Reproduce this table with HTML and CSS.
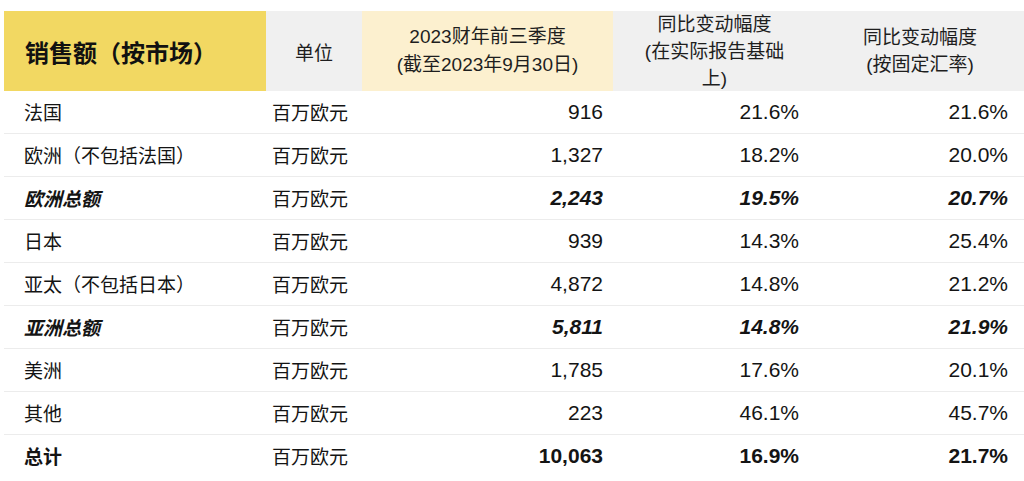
FILE: index.html
```html
<!DOCTYPE html>
<html lang="zh-CN">
<head>
<meta charset="utf-8">
<title>销售额（按市场）</title>
<link rel="stylesheet" href="styles.css">
</head>
<body>
<div class="sales-table">
  <div class="hcell h-title">销售额（按市场）</div>
  <div class="hcell h-unit">单位</div>
  <div class="hcell h-period">2023财年前三季度<br>(截至2023年9月30日)</div>
  <div class="hcell h-grey">同比变动幅度<br>(在实际报告基础<br>上)</div>
  <div class="hcell h-grey">同比变动幅度<br>(按固定汇率)</div>

  <div class="row"><div class="c name">法国</div><div class="c unit">百万欧元</div><div class="c num">916</div><div class="c pct">21.6%</div><div class="c pct2">21.6%</div></div>
  <div class="row"><div class="c name">欧洲（不包括法国）</div><div class="c unit">百万欧元</div><div class="c num">1,327</div><div class="c pct">18.2%</div><div class="c pct2">20.0%</div></div>
  <div class="row sub"><div class="c name">欧洲总额</div><div class="c unit">百万欧元</div><div class="c num">2,243</div><div class="c pct">19.5%</div><div class="c pct2">20.7%</div></div>
  <div class="row"><div class="c name">日本</div><div class="c unit">百万欧元</div><div class="c num">939</div><div class="c pct">14.3%</div><div class="c pct2">25.4%</div></div>
  <div class="row"><div class="c name">亚太（不包括日本）</div><div class="c unit">百万欧元</div><div class="c num">4,872</div><div class="c pct">14.8%</div><div class="c pct2">21.2%</div></div>
  <div class="row sub"><div class="c name">亚洲总额</div><div class="c unit">百万欧元</div><div class="c num">5,811</div><div class="c pct">14.8%</div><div class="c pct2">21.9%</div></div>
  <div class="row"><div class="c name">美洲</div><div class="c unit">百万欧元</div><div class="c num">1,785</div><div class="c pct">17.6%</div><div class="c pct2">20.1%</div></div>
  <div class="row"><div class="c name">其他</div><div class="c unit">百万欧元</div><div class="c num">223</div><div class="c pct">46.1%</div><div class="c pct2">45.7%</div></div>
  <div class="row total last"><div class="c name">总计</div><div class="c unit">百万欧元</div><div class="c num">10,063</div><div class="c pct">16.9%</div><div class="c pct2">21.7%</div></div>
</div>
</body>
</html>
```

FILE: styles.css
```css
html, body {
  margin: 0;
  padding: 0;
  background: #ffffff;
}
body {
  padding: 11px 0 0 4px;
  font-family: "Liberation Sans", "Noto Sans CJK SC", sans-serif;
  color: #141414;
}
.sales-table {
  display: grid;
  grid-template-columns: 262px 96px 251px 203px 1fr;
}
.hcell {
  box-sizing: border-box;
  height: 80px;
  overflow: hidden;
  display: flex;
  align-items: center;
  justify-content: center;
  text-align: center;
  font-size: 19px;
  line-height: 27px;
  font-family: "Liberation Sans", "Noto Sans CJK SC", sans-serif;
  color: #1e1e1e;
}
.h-title {
  background: #f2d862;
  justify-content: flex-start;
  padding-left: 21px;
  font-size: 24px;
  font-weight: bold;
  font-family: "Noto Sans CJK SC", sans-serif;
  color: #111;
}
.h-unit { background: #f0f0f0; font-family: "Noto Sans CJK SC", sans-serif; }
.h-period { background: #fcf0cf; line-height: 28px; }
.h-grey { background: #f0f0f0; }
.row {
  display: contents;
}
.c {
  box-sizing: border-box;
  height: 43px;
  border-bottom: 1px solid #ececec;
  display: flex;
  align-items: center;
  font-size: 19px;
  line-height: 24px;
}
.row.last .c { border-bottom-color: transparent; }
.name { padding-left: 20px; font-family: "Noto Sans CJK SC", sans-serif; }
.unit { padding-left: 6px; font-family: "Noto Sans CJK SC", sans-serif; }
.num { justify-content: flex-end; padding-right: 10px; font-size: 21px; }
.pct { justify-content: flex-end; padding-right: 17px; font-size: 21px; }
.pct2 { justify-content: flex-end; padding-right: 16px; font-size: 21px; }
.sub .name, .sub .num, .sub .pct, .sub .pct2 { font-weight: bold; font-style: italic; }
.total .name, .total .num, .total .pct, .total .pct2 { font-weight: bold; }
```
